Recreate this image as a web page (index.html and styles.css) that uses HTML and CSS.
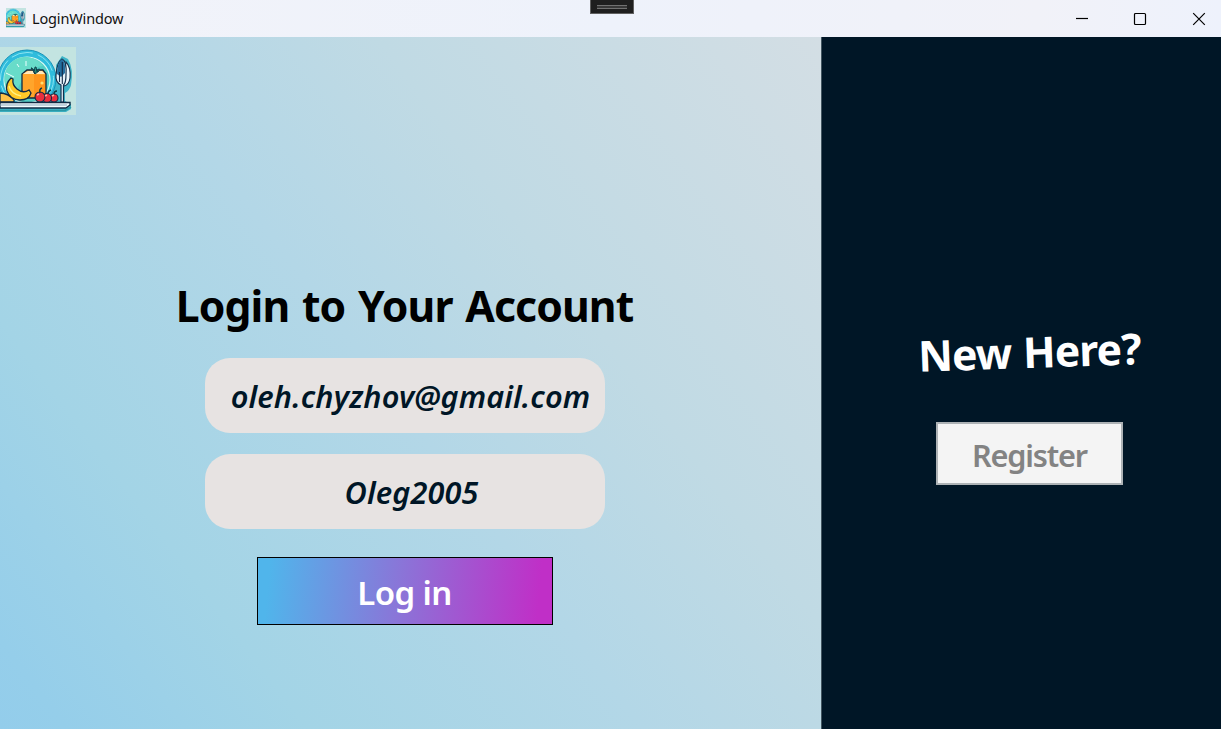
FILE: index.html
```html
<!DOCTYPE html>
<html lang="en">
<head>
<meta charset="utf-8">
<title>LoginWindow</title>
<link rel="stylesheet" href="styles.css">
</head>
<body>
<svg class="defs" aria-hidden="true">
  <symbol id="food" viewBox="0 0 76 68">
    <rect width="76" height="68" fill="#c3e4e1"/>
    <path d="M0 30H56V18L62 9L68 12Q74 22 71 38Q70 43 65 46V54L71 57V62L66 65H0Z" fill="#3fb5c9"/>
    <circle cx="27" cy="32" r="29" fill="#2fbcdc" stroke="#1a93b8" stroke-width="1"/>
    <circle cx="27" cy="32" r="26.5" fill="none" stroke="#8ae5f2" stroke-width="1" stroke-dasharray="22 5"/>
    <circle cx="27" cy="33" r="23" fill="#52cdc4" stroke="#d5f8f3" stroke-width="1.2"/>
    <path d="M8 43A21 21 0 0 1 43 19Q27 20 17 43Z" fill="#68dcc9"/>
    <path d="M26 14V19M17 17l2 3M6 26l8 4" stroke="#eaffff" stroke-width="1" fill="none"/>
    <path d="M22 51V27L27 23H43L46 27V51Z" fill="#ffa52b" stroke="#102a43" stroke-width="1.3"/>
    <path d="M34 28h11v22H34Z" fill="#ff951c"/>
    <path d="M23 27l5-3h14l3 3Z" fill="#ffe8bd"/>
    <circle cx="42" cy="36" r="1.6" fill="#ffe071"/>
    <path d="M34 26Q33 20 31 21L35 26Q34 19 36 20L37 25Q40 19 39 24L35 27Z" fill="#27ad8b" stroke="#103b47" stroke-width="1"/>
    <path d="M0 46Q8 46 14 53V55H0Z" fill="#ffc247" stroke="#102a43" stroke-width="1.3"/>
    <path d="M11 31Q5 37 7 44Q10 53 20 53Q29 53 31 46L29 43Q23 47 17 42Q12 38 13 32Z" fill="#ffc928" stroke="#102a43" stroke-width="1.3"/>
    <path d="M9 39Q11 47 21 49" fill="none" stroke="#fff082" stroke-width="1.3"/>
    <g fill="#e92e3d" stroke="#102a43" stroke-width="1.1">
      <circle cx="54" cy="51" r="4"/><circle cx="47" cy="51" r="4.5"/><circle cx="40" cy="50" r="5"/>
    </g>
    <path d="M40 46q-1-4 2-5M48 47q0-3 3-4M54 47q0-3 3-3" fill="none" stroke="#103d45" stroke-width="1.4"/>
    <path d="M37 48l2-1M45 49l2-1M52 49l2-1" stroke="#ffb3a5" stroke-width="1.5"/>
    <path d="M66 15Q71 20 70 31Q69 38 64 39L62 37Z" fill="#eef8fc" stroke="#14304d" stroke-width="1.1"/>
    <path d="M62 12Q67 14 66 28Q66 36 63.5 38V55H61V38Q55 35 56 28Q57 15 62 12Z" fill="#e4f2f9" stroke="#14304d" stroke-width="1.2"/>
    <path d="M62 12Q57 15 57 27L61 30L65 26Q66 15 62 12Z" fill="#236e9e"/>
    <path d="M59.5 25v10M62.3 15v22" stroke="#142945" stroke-width="1.1"/>
    <path d="M0 55.5H70V58L66 61H0Z" fill="#f3fcff" stroke="#102a43" stroke-width="1.4"/>
    <path d="M0 58H67" stroke="#8da9bc" stroke-width="1"/>
    <path d="M0 63.5H65L71 60" fill="none" stroke="#2a98a5" stroke-width="1.5"/>
  </symbol>
</svg>
<header class="titlebar">
  <svg class="app-icon" preserveAspectRatio="none" viewBox="0 0 76 68"><use href="#food" width="76" height="68"/></svg>
  <span class="title">LoginWindow</span>
  <div class="grip"><i></i></div>
  <div class="controls">
    <svg viewBox="0 0 14 14"><path d="M1 6.5H13"/></svg>
    <svg viewBox="0 0 14 14"><rect x="1.5" y="1.5" width="11" height="11" rx="1"/></svg>
    <svg viewBox="0 0 14 14"><path d="M1.2 1.2L12.8 12.8M12.8 1.2L1.2 12.8"/></svg>
  </div>
</header>
<main class="window">
  <section class="login">
    <svg class="logo"><use href="#food"/></svg>
    <h1 class="heading"><span>Login to Your Account</span></h1>
    <div class="field email"><span>oleh.chyzhov@gmail.com</span></div>
    <div class="field password"><span>Oleg2005</span></div>
    <button class="submit"><span>Log in</span></button>
  </section>
  <aside class="signup">
    <h2 class="new-here">New Here?</h2>
    <button class="register"><span>Register</span></button>
  </aside>
</main>
</body>
</html>
```
FILE: styles.css
```css
* { box-sizing: border-box; }
body {
  margin: 0;
  width: 1221px;
  height: 729px;
  overflow: hidden;
  font-family: "Noto Sans", "Open Sans", sans-serif;
}
button { font-family: inherit; padding: 0; border-radius: 0; }
.defs { position: absolute; width: 0; height: 0; }
.titlebar {
  position: relative;
  display: flex;
  align-items: center;
  height: 37px;
  padding-left: 6px;
  background: linear-gradient(90deg, #f2f3f9, #eef2fb 50%, #f1f2f8 85%, #eef2fc);
}
.app-icon { width: 20px; height: 20px; margin-bottom: 1px; }
.title { margin: 0 0 2px 6px; font-size: 14.5px; line-height: 20px; letter-spacing: -0.15px; color: #111; }
.grip {
  position: absolute;
  left: 590px;
  top: 0;
  width: 44px;
  height: 14px;
  padding: 5px 6px;
  border: 1px solid #606060;
  border-top: 0;
  background: #1f1f1f;
}
.grip i { display: block; height: 4px; border: solid #717171; border-width: 1px 0; background: #383838; }
.controls { display: flex; gap: 44px; margin-left: auto; padding-right: 15px; }
.controls svg { width: 14px; height: 14px; fill: none; stroke: #000; stroke-width: 1.2; }
.controls svg:nth-child(2) { margin-right: 1px; }
.window { display: flex; height: 692px; }
.login {
  display: flex;
  flex-direction: column;
  align-items: center;
  width: 821px;
  padding-right: 12px;
  background: linear-gradient(53deg, #93cdeb, #95ceea 5%, #a3d4e6 23%, #b3d7e7 48%, #c0dae4 67%, #d3dee4);
}
.logo { align-self: flex-start; width: 76px; height: 68px; margin-top: 10px; }
.heading { margin: 161px 0 0; font-size: 42.7px; line-height: 60px; font-weight: 700; letter-spacing: -0.9px; word-spacing: 2.5px; white-space: nowrap; color: #000; }
.field {
  display: flex;
  align-items: center;
  justify-content: center;
  width: 400px;
  height: 75px;
  margin-top: 21px;
  border-radius: 25px;
  background: #e7e3e2;
  color: #001626;
  font-size: 30.7px;
  font-style: italic;
  font-weight: 600;
  letter-spacing: 0.1px;
  white-space: nowrap;
}
.heading + .field { margin-top: 21.5px; }
.email { padding: 1px 0 0 12px; }
.password { padding: 1px 0 0 14px; }
.submit {
  width: 296px;
  height: 68px;
  margin-top: 28.5px;
  padding-top: 3px;
  border: 1px solid #000;
  background: linear-gradient(95deg, #50b5eb 4%, #8a75d8 48%, #c02fc7 95%);
  color: #fff;
  font-size: 33px;
  font-weight: 600;
  letter-spacing: -0.6px;
}
.signup {
  display: flex;
  flex-direction: column;
  align-items: center;
  width: 400px;
  padding-left: 16px;
  border-left: 1px solid #435661;
  background: #001626;
}
.new-here { margin: 285px 0 0; color: #fff; font-size: 42.7px; line-height: 60px; font-weight: 700; letter-spacing: -0.9px; word-spacing: 1.5px; transform: rotate(-2deg); }
.register {
  width: 187px;
  height: 63px;
  margin-top: 40px;
  padding-top: 3px;
  border: 2px solid #adb2b5;
  background: #f4f4f4;
  color: #838383;
  font-size: 30.7px;
  font-weight: 600;
  letter-spacing: -1.2px;
}
```
